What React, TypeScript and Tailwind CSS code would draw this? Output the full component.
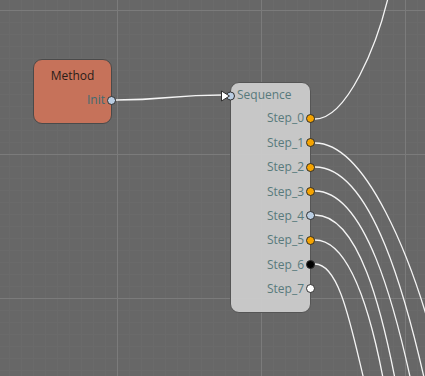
const steps = [
  { name: 'Step_0', color: '#f5a300' },
  { name: 'Step_1', color: '#f5a300' },
  { name: 'Step_2', color: '#f5a300' },
  { name: 'Step_3', color: '#f5a300' },
  { name: 'Step_4', color: '#b9cde2' },
  { name: 'Step_5', color: '#f5a300' },
  { name: 'Step_6', color: '#000000' },
  { name: 'Step_7', color: '#ffffff' },
];

// wires leaving the Sequence outputs, plus the Init link
const wires = [
  'M116,100 C168,100 170,95 222,95',
  'M315,119 C345,119 378,50 392,-20',
  'M315,143 C366,143 412,258 436,350',
  'M315,167 C372,167 407,298 429,400',
  'M315,191 C365,191 395,303 415,400',
  'M315,215 C358,215 382,306 399,400',
  'M315,240 C350,240 372,312 387,400',
  'M315,264 C342,264 353,339 369,400',
];

function Port({ color }: { color: string }) {
  return (
    <span
      className="-mr-[5px] ml-[2px] block h-[9px] w-[9px] shrink-0 rounded-full border border-[#2e2e2e]"
      style={{ backgroundColor: color }}
    />
  );
}

function Grid() {
  return (
    <svg className="absolute inset-0" width="425" height="376">
      <defs>
        <pattern id="minor" width="12" height="12" patternUnits="userSpaceOnUse" x="117" y="10">
          <path d="M0,0.5 H12 M0.5,0 V12" stroke="#6a6a6a" strokeWidth="1" fill="none" />
        </pattern>
        <pattern id="major" width="144" height="144" patternUnits="userSpaceOnUse" x="117" y="10">
          <path d="M0,0.5 H144 M0.5,0 V144" stroke="#7b7b7b" strokeWidth="1" fill="none" />
        </pattern>
      </defs>
      <rect width="425" height="376" fill="url(#minor)" />
      <rect width="425" height="376" fill="url(#major)" />
      {wires.map((d, i) => (
        <path key={i} d={d} stroke="#f4f4f4" strokeWidth="1.3" fill="none" />
      ))}
    </svg>
  );
}

export default function App() {
  return (
    <div className="relative h-[376px] w-[425px] overflow-hidden bg-[#676767] font-['Open_Sans',sans-serif] text-[12px]">
      <Grid />

      <div className="absolute left-[33px] top-[59px] flex h-[65px] w-[79px] flex-col rounded-[9px] border border-[#4a4a4a] bg-[#c6725a]">
        <div className="pt-[7px] text-center leading-[18px] text-[#2a1d18]">Method</div>
        <div className="mt-[6px] flex h-[18px] items-center justify-end leading-[18px] text-[#3e6b72]">
          Init
          <Port color="#b9cde2" />
        </div>
      </div>

      <div className="absolute left-[230px] top-[82px] flex h-[231px] w-[81px] flex-col rounded-[9px] border border-[#555555] bg-[#cccccc]/95">
        <svg className="absolute -left-[12px] top-[6px]" width="18" height="14">
          <circle cx="11.5" cy="7" r="4" fill="#b9cde2" stroke="#2e2e2e" strokeWidth="1" />
          <polygon points="2.5,2 10.5,7 2.5,12" fill="#ffffff" stroke="#2e2e2e" strokeWidth="1" />
        </svg>
        <div className="pl-[6px] pt-[3px] leading-[18px] text-[#587a7c]">Sequence</div>
        <div className="mt-[2.3px] flex flex-col">
          {steps.map((s) => (
            <div key={s.name} className="flex h-[24.35px] items-center justify-end leading-[18px] text-[#587a7c]">
              {s.name}
              <Port color={s.color} />
            </div>
          ))}
        </div>
      </div>
    </div>
  );
}
